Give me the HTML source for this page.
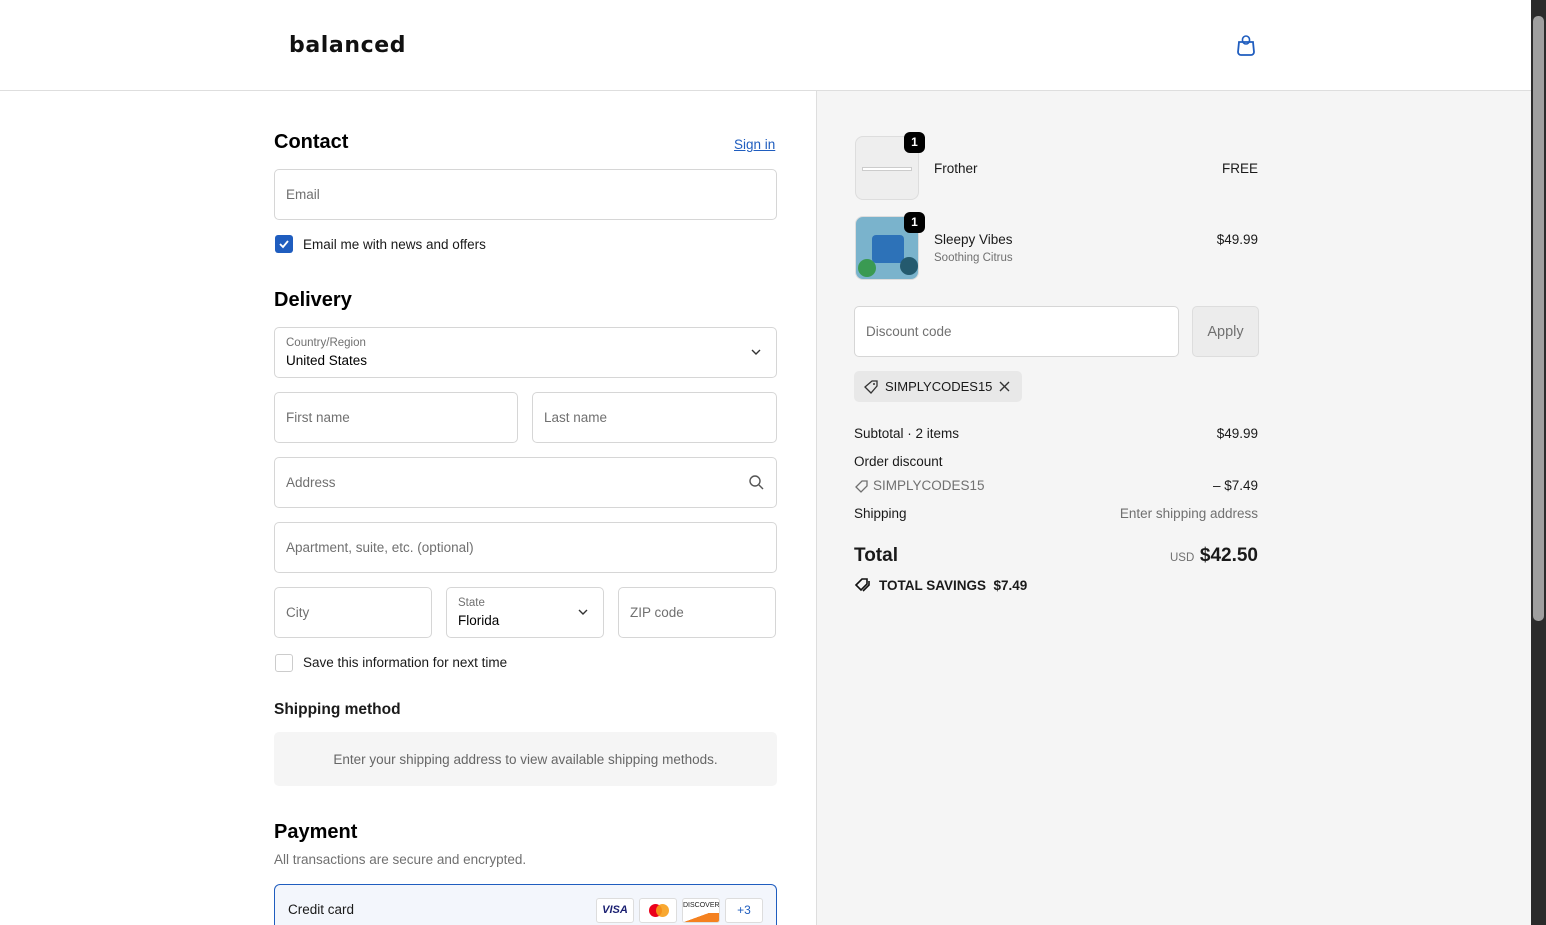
<!DOCTYPE html>
<html><head><meta charset="utf-8"><style>
*{box-sizing:border-box;margin:0;padding:0}
html,body{width:1546px;height:925px;overflow:hidden}
body{font-family:"Liberation Sans",sans-serif;color:#1a1a1a;background:#fff;position:relative;font-size:13.5px}
.abs{position:absolute}
.header{position:absolute;left:0;top:0;width:1531px;height:91px;border-bottom:1px solid #dedede;background:#fff}
.right{position:absolute;left:816px;top:91px;width:715px;height:834px;background:#f5f5f5;border-left:1px solid #dedede}
.inp{position:absolute;border:1px solid #d6d6d6;border-radius:5px;background:#fff;height:51px}
.ph{position:absolute;left:11px;top:17px;color:#707070;font-size:13.5px}
h2{position:absolute;font-size:20px;font-weight:bold;color:#000}
.lbl{position:absolute;left:11px;top:9px;font-size:11.5px;color:#707070}
.val{position:absolute;left:11px;top:25px;font-size:13.5px;color:#000}
.sb{position:absolute;left:1531px;top:0;width:15px;height:925px;background:#2b2b2b}
.row{position:absolute;font-size:13.5px}
.r{position:absolute;right:273px;font-size:13.5px;text-align:right}
</style></head><body>
<div class="header">
 <div class="abs" style="left:289px;top:33px;font-family:'DejaVu Sans',sans-serif;font-size:22px;font-weight:bold;letter-spacing:0.6px;color:#111">balanced</div>
 <svg class="abs" style="left:1236px;top:34px" width="20" height="22" viewBox="0 0 20 22"><path d="M3 8h14l1 10a3 3 0 0 1-3 3H5a3 3 0 0 1-3-3z" fill="none" stroke="#1f5dbf" stroke-width="1.8"/><rect x="6.5" y="2" width="7" height="8" rx="3.5" fill="none" stroke="#1f5dbf" stroke-width="1.6"/></svg>
</div>
<h2 style="left:274px;top:131px">Contact</h2>
<div class="abs" style="left:734px;top:137px;color:#1f5dbf;text-decoration:underline;font-size:13.5px">Sign in</div>
<div class="inp" style="left:274px;top:169px;width:503px"><span class="ph">Email</span></div>
<div class="abs" style="left:275px;top:235px;width:18px;height:18px;background:#1f5dbf;border-radius:3px"><svg width="18" height="18"><path d="M5 9l3 3 5-6" stroke="#fff" stroke-width="1.8" fill="none"/></svg></div>
<div class="abs" style="left:303px;top:237px">Email me with news and offers</div>
<h2 style="left:274px;top:289px">Delivery</h2>
<div class="inp" style="left:274px;top:327px;width:503px"><span class="lbl">Country/Region</span><span class="val">United States</span><svg class="abs" style="left:476px;top:20px" width="10" height="8"><path d="M1 2l4 4 4-4" stroke="#333" stroke-width="1.4" fill="none"/></svg></div>
<div class="inp" style="left:274px;top:392px;width:244px"><span class="ph">First name</span></div>
<div class="inp" style="left:532px;top:392px;width:245px"><span class="ph">Last name</span></div>
<div class="inp" style="left:274px;top:457px;width:503px"><span class="ph">Address</span><svg class="abs" style="left:473px;top:16px" width="16" height="16"><circle cx="7" cy="7" r="5" stroke="#555" stroke-width="1.4" fill="none"/><path d="M11 11l4 4" stroke="#555" stroke-width="1.4"/></svg></div>
<div class="inp" style="left:274px;top:522px;width:503px"><span class="ph">Apartment, suite, etc. (optional)</span></div>
<div class="inp" style="left:274px;top:587px;width:158px"><span class="ph">City</span></div>
<div class="inp" style="left:446px;top:587px;width:158px"><span class="lbl">State</span><span class="val">Florida</span><svg class="abs" style="left:131px;top:20px" width="10" height="8"><path d="M1 2l4 4 4-4" stroke="#333" stroke-width="1.4" fill="none"/></svg></div>
<div class="inp" style="left:618px;top:587px;width:158px"><span class="ph">ZIP code</span></div>
<div class="abs" style="left:275px;top:654px;width:18px;height:18px;border:1px solid #ccc;border-radius:3px;background:#fff"></div>
<div class="abs" style="left:303px;top:655px">Save this information for next time</div>
<div class="abs" style="left:274px;top:701px;font-size:15.5px;font-weight:bold">Shipping method</div>
<div class="abs" style="left:274px;top:732px;width:503px;height:54px;background:#f5f5f5;border-radius:5px;text-align:center;line-height:56px;color:#666">Enter your shipping address to view available shipping methods.</div>
<h2 style="left:274px;top:821px">Payment</h2>
<div class="abs" style="left:274px;top:852px;color:#707070;font-size:13.5px">All transactions are secure and encrypted.</div>
<div class="abs" style="left:274px;top:884px;width:503px;height:41px;border:1px solid #1f5dbf;border-bottom:none;border-radius:6px 6px 0 0;background:#f3f6fc">
 <div class="abs" style="left:13px;top:17px;font-size:13.5px">Credit card</div>
 <div class="abs" style="left:321px;top:13px;width:38px;height:25px;background:#fff;border:1px solid #ddd;border-radius:3px;font-size:11px;font-weight:bold;font-style:italic;color:#1a1f71;text-align:center;line-height:23px">VISA</div>
 <div class="abs" style="left:364px;top:13px;width:38px;height:25px;background:#fff;border:1px solid #ddd;border-radius:3px"><div class="abs" style="left:9px;top:5px;width:13px;height:13px;border-radius:50%;background:#eb001b"></div><div class="abs" style="left:16px;top:5px;width:13px;height:13px;border-radius:50%;background:#f79e1b;opacity:.9"></div></div>
 <div class="abs" style="left:407px;top:13px;width:38px;height:25px;background:#fff;border:1px solid #ddd;border-radius:3px;font-size:7px;color:#222;text-align:center;line-height:14px;overflow:hidden">DISCOVER<div style="height:10px;background:linear-gradient(160deg,#fff 40%,#f48120 41%)"></div></div>
 <div class="abs" style="left:450px;top:13px;width:38px;height:25px;background:#fff;border:1px solid #ddd;border-radius:3px;font-size:12px;color:#1f5dbf;text-align:center;line-height:23px">+3</div>
</div>
<div class="right">
 <div class="abs" style="left:38px;top:45px;width:64px;height:64px;border-radius:8px;background:#eee;border:1px solid #ddd"><div class="abs" style="left:6px;top:30px;width:50px;height:4px;background:#fff;border:1px solid #ccc"></div></div>
 <div class="abs" style="left:87px;top:41px;width:21px;height:21px;background:#000;color:#fff;border-radius:6px;font-size:12px;font-weight:bold;text-align:center;line-height:21px">1</div>
 <div class="abs" style="left:117px;top:70px">Frother</div>
 <div class="r" style="top:70px">FREE</div>
 <div class="abs" style="left:38px;top:125px;width:64px;height:64px;border-radius:8px;background:#7ab3cc;border:1px solid #ddd;overflow:hidden"><div class="abs" style="left:16px;top:18px;width:32px;height:28px;background:#2d72b8;border-radius:4px"></div><div class="abs" style="left:2px;top:42px;width:18px;height:18px;border-radius:50%;background:#3a9a52"></div><div class="abs" style="left:44px;top:40px;width:18px;height:18px;border-radius:50%;background:#245a6e"></div></div>
 <div class="abs" style="left:87px;top:121px;width:21px;height:21px;background:#000;color:#fff;border-radius:6px;font-size:12px;font-weight:bold;text-align:center;line-height:21px">1</div>
 <div class="abs" style="left:117px;top:141px">Sleepy Vibes</div>
 <div class="abs" style="left:117px;top:161px;font-size:11.5px;color:#707070">Soothing Citrus</div>
 <div class="r" style="top:141px">$49.99</div>
 <div class="inp" style="left:37px;top:215px;width:325px;height:51px"><span class="ph">Discount code</span></div>
 <div class="abs" style="left:375px;top:215px;width:67px;height:51px;background:#ececec;border:1px solid #ddd;border-radius:5px;color:#707070;text-align:center;line-height:51px;font-size:14.5px">Apply</div>
 <div class="abs" style="left:37px;top:280px;width:168px;height:31px;background:#e8e8e8;border-radius:5px">
  <svg class="abs" style="left:9px;top:8px" width="16" height="16"><path d="M2 8l7-6h5v5l-6 7z" fill="none" stroke="#333" stroke-width="1.3"/><circle cx="11" cy="5" r="1" fill="#333"/></svg>
  <div class="abs" style="left:31px;top:8px;font-size:13px">SIMPLYCODES15</div>
  <svg class="abs" style="left:145px;top:10px" width="11" height="11"><path d="M1 1l9 9M10 1l-9 9" stroke="#333" stroke-width="1.4"/></svg>
 </div>
 <div class="row" style="left:37px;top:335px">Subtotal · 2 items</div><div class="r" style="top:335px">$49.99</div>
 <div class="row" style="left:37px;top:363px">Order discount</div>
 <svg class="abs" style="left:37px;top:388px" width="15" height="15"><path d="M2 8l6-6h5v5l-6 6z" fill="none" stroke="#707070" stroke-width="1.3"/></svg>
 <div class="row" style="left:56px;top:387px;color:#707070">SIMPLYCODES15</div><div class="r" style="top:387px">– $7.49</div>
 <div class="row" style="left:37px;top:415px">Shipping</div><div class="r" style="top:415px;color:#707070">Enter shipping address</div>
 <div class="abs" style="left:37px;top:454px;font-size:19px;font-weight:bold">Total</div>
 <div class="abs" style="left:353px;top:461px;font-size:11.5px;color:#707070">USD</div>
 <div class="r" style="top:454px;font-size:19px;font-weight:bold">$42.50</div>
 <svg class="abs" style="left:37px;top:486px" width="18" height="16"><path d="M2 8l6-6h5v5l-6 6z" fill="none" stroke="#111" stroke-width="1.6"/><path d="M15 4v4l-6 6" fill="none" stroke="#111" stroke-width="1.6"/></svg>
 <div class="abs" style="left:62px;top:487px;font-size:13.5px;font-weight:bold">TOTAL SAVINGS&nbsp; $7.49</div>
</div>
<div class="sb"><div class="abs" style="left:2px;top:16px;width:11px;height:605px;background:#9f9f9f;border-radius:5px"></div></div>
</body></html>
